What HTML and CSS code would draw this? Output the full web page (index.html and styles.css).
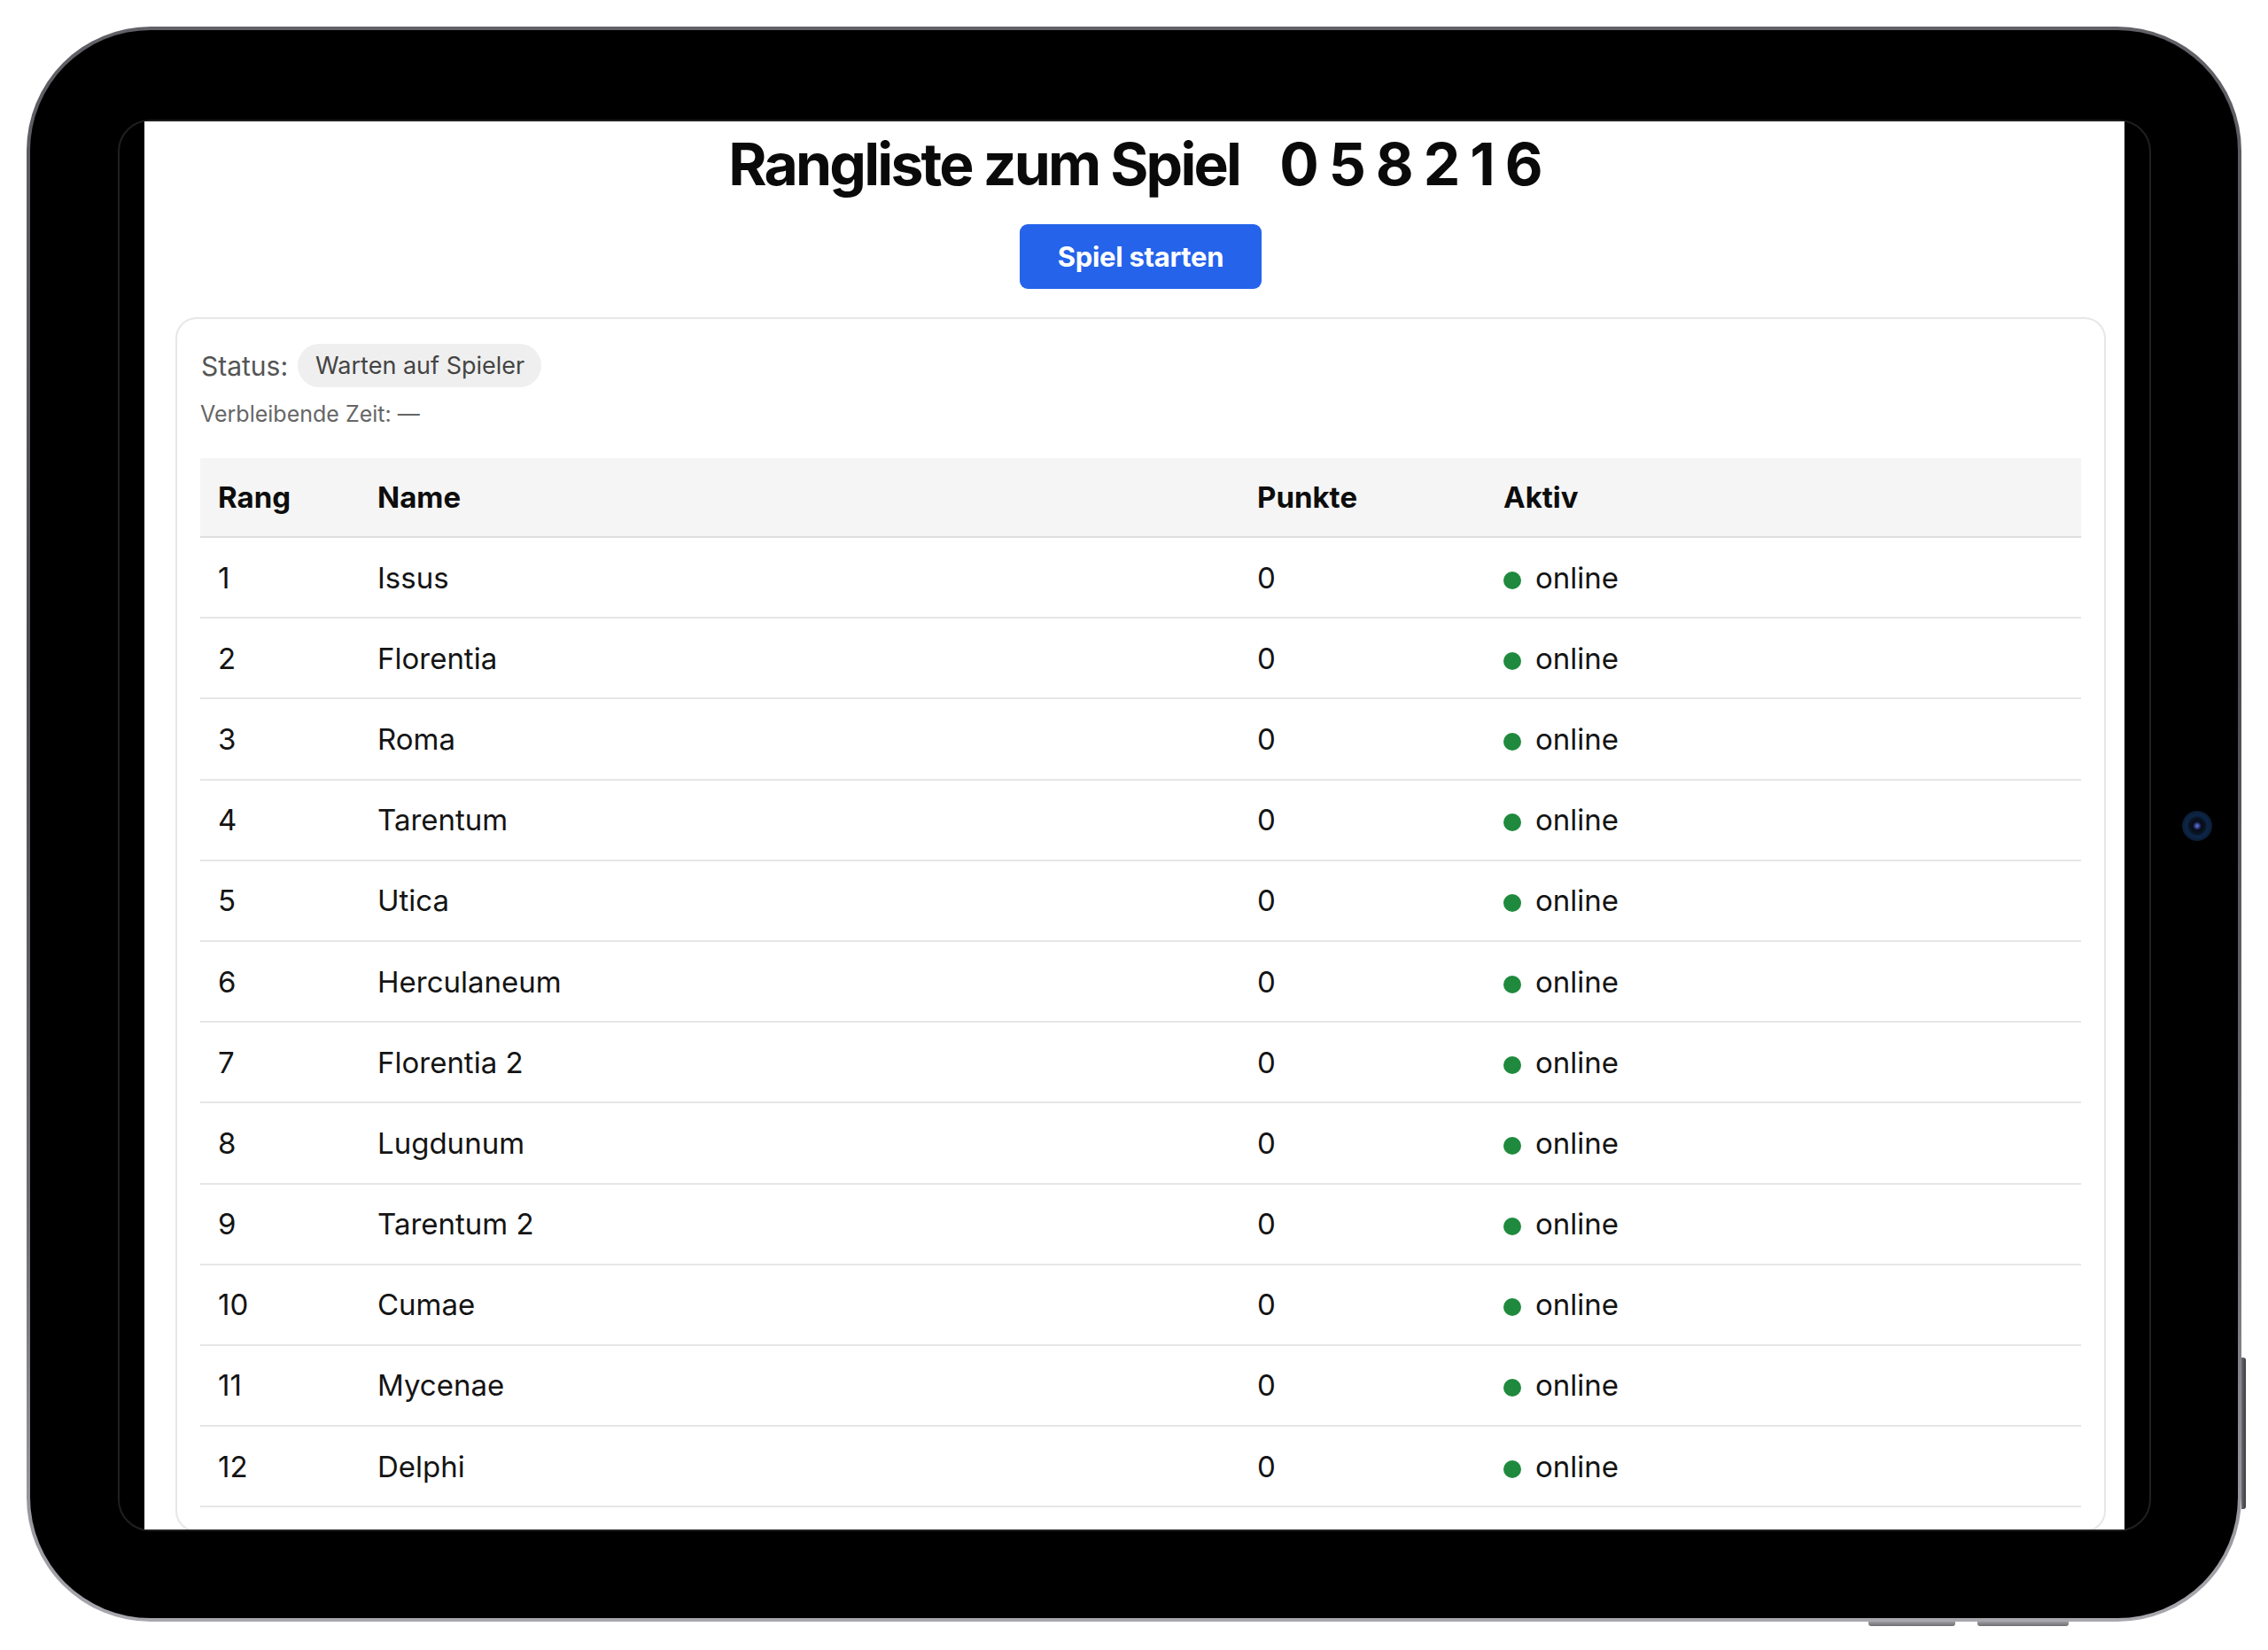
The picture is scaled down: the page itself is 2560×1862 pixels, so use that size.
FILE: index.html
```html
<!DOCTYPE html>
<html lang="de">
<head>
<meta charset="utf-8">
<title>Rangliste zum Spiel 058216</title>
<link rel="stylesheet" href="styles.css">
</head>
<body>
<div class="stage">
  <div class="device">
    <div class="device-inner">
      <div class="glass">
        <main class="screen">
          <h1 class="title">Rangliste zum Spiel<span class="code">058216</span></h1>
          <div class="actions"><button class="btn-start" type="button">Spiel starten</button></div>
          <section class="card">
            <div class="status-row">
              <span class="status-label">Status:</span>
              <span class="pill">Warten auf Spieler</span>
            </div>
            <div class="time-row">Verbleibende Zeit: —</div>
            <div class="board" role="table">
              <div class="board-row board-head" role="row">
                <div class="cell" role="columnheader">Rang</div>
                <div class="cell" role="columnheader">Name</div>
                <div class="cell" role="columnheader">Punkte</div>
                <div class="cell" role="columnheader">Aktiv</div>
              </div>
              <div class="board-row" role="row"><div class="cell">1</div><div class="cell">Issus</div><div class="cell">0</div><div class="cell"><span class="dot"></span>online</div></div>
              <div class="board-row" role="row"><div class="cell">2</div><div class="cell">Florentia</div><div class="cell">0</div><div class="cell"><span class="dot"></span>online</div></div>
              <div class="board-row" role="row"><div class="cell">3</div><div class="cell">Roma</div><div class="cell">0</div><div class="cell"><span class="dot"></span>online</div></div>
              <div class="board-row" role="row"><div class="cell">4</div><div class="cell">Tarentum</div><div class="cell">0</div><div class="cell"><span class="dot"></span>online</div></div>
              <div class="board-row" role="row"><div class="cell">5</div><div class="cell">Utica</div><div class="cell">0</div><div class="cell"><span class="dot"></span>online</div></div>
              <div class="board-row" role="row"><div class="cell">6</div><div class="cell">Herculaneum</div><div class="cell">0</div><div class="cell"><span class="dot"></span>online</div></div>
              <div class="board-row" role="row"><div class="cell">7</div><div class="cell">Florentia 2</div><div class="cell">0</div><div class="cell"><span class="dot"></span>online</div></div>
              <div class="board-row" role="row"><div class="cell">8</div><div class="cell">Lugdunum</div><div class="cell">0</div><div class="cell"><span class="dot"></span>online</div></div>
              <div class="board-row" role="row"><div class="cell">9</div><div class="cell">Tarentum 2</div><div class="cell">0</div><div class="cell"><span class="dot"></span>online</div></div>
              <div class="board-row" role="row"><div class="cell">10</div><div class="cell">Cumae</div><div class="cell">0</div><div class="cell"><span class="dot"></span>online</div></div>
              <div class="board-row" role="row"><div class="cell">11</div><div class="cell">Mycenae</div><div class="cell">0</div><div class="cell"><span class="dot"></span>online</div></div>
              <div class="board-row" role="row"><div class="cell">12</div><div class="cell">Delphi</div><div class="cell">0</div><div class="cell"><span class="dot"></span>online</div></div>
            </div>
          </section>
        </main>
      </div>
    </div>
    <span class="camera"></span>
    <span class="btn-side"></span>
    <span class="btn-top btn-top-a"></span>
    <span class="btn-top btn-top-b"></span>
  </div>
</div>
</body>
</html>
```
FILE: styles.css
```css
* { box-sizing: border-box; }

html, body {
  margin: 0;
  padding: 0;
  background: #ffffff;
}

body {
  font-family: Inter, "Liberation Sans", Arial, sans-serif;
  color: #111111;
}

.stage {
  padding: 30px;
  width: 2560px;
  height: 1862px;
}

.device {
  position: relative;
  width: 2500px;
  height: 1800px;
  border-radius: 140px;
  padding: 4px;
  background: linear-gradient(180deg, #626167 0%, #4d4c52 40%, #6f6e74 75%, #a9a7ae 100%);
}

.device-inner {
  width: 100%;
  height: 100%;
  border-radius: 136px;
  background: #000000;
  padding: 101px 98px 98px 99px;
}

.glass {
  width: 100%;
  height: 100%;
  border: 2px solid #202022;
  border-radius: 36px;
  background: #000000;
  padding: 0 28px;
}

.screen {
  height: 100%;
  background: #ffffff;
  overflow: hidden;
  padding: 8px 21px 0 35px;
}

.title {
  margin: 0;
  text-align: center;
  font-size: 66px;
  line-height: 80px;
  font-weight: 700;
  letter-spacing: -2.8px;
  color: #0a0a0a;
}

.code {
  margin-left: 45px;
  letter-spacing: 11px;
}

.actions {
  margin-top: 28px;
  display: flex;
  justify-content: center;
}

.btn-start {
  height: 73px;
  padding: 0 43px;
  border: 0;
  border-radius: 9px;
  background: #2563eb;
  color: #ffffff;
  font-family: Inter, "Liberation Sans", Arial, sans-serif;
  font-size: 31px;
  font-weight: 700;
  letter-spacing: -0.3px;
}

.card {
  margin-top: 32px;
  border: 2px solid #e7e7e7;
  border-radius: 24px;
  padding: 28px 26px 26px 26px;
}

.status-row {
  display: flex;
  align-items: center;
  gap: 11px;
  padding-left: 1px;
}

.status-label {
  font-size: 30px;
  color: #555555;
}

.pill {
  height: 49px;
  display: inline-flex;
  align-items: center;
  padding: 0 19px 0 20px;
  border-radius: 25px;
  background: #efefef;
  color: #444444;
  font-size: 27px;
}

.time-row {
  margin-top: 14px;
  padding-left: 0;
  font-size: 25px;
  line-height: 32px;
  color: #666666;
}

.board {
  margin-top: 34px;
}

.board-row {
  display: grid;
  grid-template-columns: 180px 993px 278px 1fr;
  align-items: center;
  height: 91.2px;
  border-bottom: 2px solid #e6e6e6;
  font-size: 33px;
  color: #141414;
}

.board-head {
  height: 90px;
  background: #f5f5f5;
  border-bottom-color: #dedede;
  font-weight: 700;
  color: #0d0d0d;
}

.cell {
  padding-left: 20px;
  white-space: nowrap;
}

.dot {
  display: inline-block;
  width: 20px;
  height: 20px;
  border-radius: 50%;
  background: #1f8a3d;
  margin-right: 16px;
  vertical-align: -1px;
}

.camera {
  position: absolute;
  left: 2433px;
  top: 885px;
  width: 34px;
  height: 34px;
  border-radius: 50%;
  background: radial-gradient(circle at 50% 50%, #6f7fd8 0, #3a4aa0 2px, #070b16 5px, #0a1424 9px, #0d2749 12px, #0a1c34 17px);
}

.btn-side {
  position: absolute;
  left: 2500px;
  top: 1502px;
  width: 5px;
  height: 171px;
  border-radius: 0 3px 3px 0;
  background: linear-gradient(90deg, #6d6c72, #3b3a3f);
}

.btn-top {
  position: absolute;
  top: 1800px;
  height: 5px;
  border-radius: 0 0 3px 3px;
  background: linear-gradient(180deg, #9d9ba2, #6e6d73);
}

.btn-top-a { left: 2079px; width: 98px; }
.btn-top-b { left: 2202px; width: 103px; }
```
